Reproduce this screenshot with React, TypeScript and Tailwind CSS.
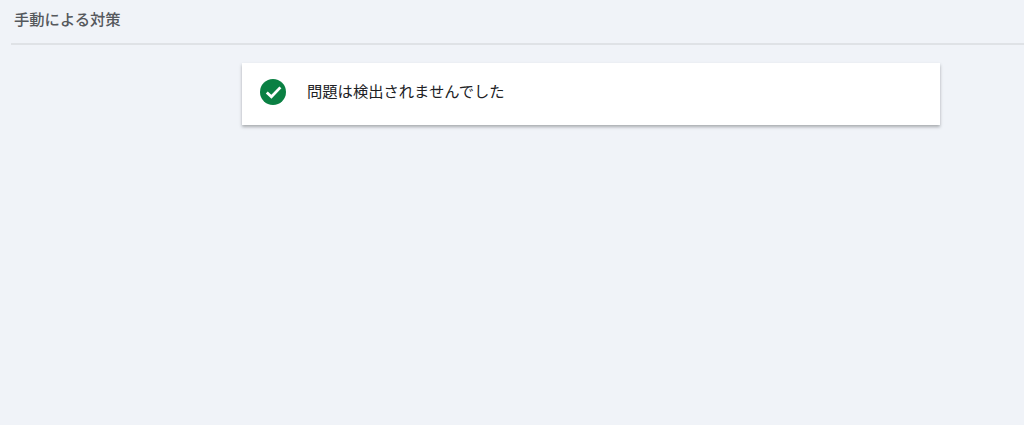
export default function App() {
  return (
    <div className="min-h-[425px] bg-[#f0f3f8] font-['Roboto','Noto_Sans_CJK_JP',sans-serif]">
      {/* Page heading */}
      <div className="ml-[11px] h-[45px] border-b-2 border-[#dfe2e6] pl-[3px] pt-[10px]">
        <h1 className="text-[15.3px] leading-[20px] font-medium text-[#55585c]">手動による対策</h1>
      </div>

      {/* Status card */}
      <div className="ml-[242px] mt-[18px] flex h-[62px] w-[698px] items-center bg-white pl-[18px] pb-[4px] shadow-[0_2px_3px_0_rgba(60,64,67,0.4)]">
        <svg width="26" height="26" viewBox="0 0 26 26" aria-hidden="true">
          <circle cx="13" cy="13" r="13" fill="#0a8043" />
          <path d="M6.8 13.4l4.6 4.4 9-9.4" fill="none" stroke="#fff" strokeWidth="2.8" />
        </svg>
        <p className="ml-[21px] text-[15.3px] font-normal text-[#202124]">問題は検出されませんでした</p>
      </div>
    </div>
  );
}
